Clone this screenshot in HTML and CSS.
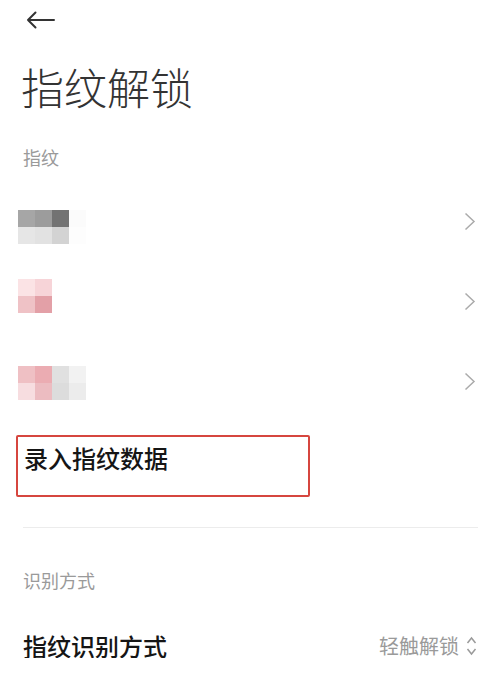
FILE: index.html
```html
<!DOCTYPE html>
<html lang="zh-CN">
<head>
<meta charset="utf-8">
<title>指纹解锁</title>
<link rel="stylesheet" href="styles.css">
</head>
<body>
<div class="topbar">
  <svg class="back" width="30" height="18" viewBox="0 0 30 18"><path d="M2 9 H28 M9.5 1.5 L2 9 L9.5 16.5" fill="none" stroke="#333" stroke-width="2" stroke-linecap="round" stroke-linejoin="round"/></svg>
</div>
<h1 class="title">指纹解锁</h1>
<div class="section-label">指纹</div>
<div class="fp-list">
  <div class="fp-row fp-row-1">
    <div class="pix cols-4">
      <span class="c-a1"></span><span class="c-a2"></span><span class="c-a3"></span><span class="c-a4"></span>
      <span class="c-a5"></span><span class="c-a6"></span><span class="c-a7"></span><span class="c-a8"></span>
    </div>
    <svg class="chev" width="12" height="19" viewBox="0 0 12 19"><path d="M1.5 1.5 L10 9.5 L1.5 17.5" fill="none" stroke="#ababab" stroke-width="1.5"/></svg>
  </div>
  <div class="fp-row fp-row-2">
    <div class="pix cols-2">
      <span class="c-b1"></span><span class="c-b2"></span>
      <span class="c-b3"></span><span class="c-b4"></span>
    </div>
    <svg class="chev" width="12" height="19" viewBox="0 0 12 19"><path d="M1.5 1.5 L10 9.5 L1.5 17.5" fill="none" stroke="#ababab" stroke-width="1.5"/></svg>
  </div>
  <div class="fp-row fp-row-3">
    <div class="pix cols-4">
      <span class="c-d1"></span><span class="c-d2"></span><span class="c-d3"></span><span class="c-d4"></span>
      <span class="c-d5"></span><span class="c-d6"></span><span class="c-d7"></span><span class="c-d8"></span>
    </div>
    <svg class="chev" width="12" height="19" viewBox="0 0 12 19"><path d="M1.5 1.5 L10 9.5 L1.5 17.5" fill="none" stroke="#ababab" stroke-width="1.5"/></svg>
  </div>
</div>
<div class="enroll">录入指纹数据</div>
<div class="divider"></div>
<div class="section-label section-label-2">识别方式</div>
<div class="mode-row">
  <span class="mode-title">指纹识别方式</span>
  <span class="mode-value">
    <span class="mode-text">轻触解锁</span>
    <svg class="updown" width="11" height="22" viewBox="0 0 11 22"><path d="M1.5 8 L5.5 3 L9.5 8 M1.5 14 L5.5 19 L9.5 14" fill="none" stroke="#9a9a9a" stroke-width="1.5"/></svg>
  </span>
</div>
</body>
</html>
```

FILE: styles.css
```css
html, body {
  margin: 0;
  padding: 0;
  background: #ffffff;
}
body {
  font-family: "Noto Sans CJK SC", "Noto Sans", sans-serif;
  color: #1a1a1a;
  width: 499px;
  overflow: hidden;
}
.topbar {
  height: 39px;
  display: flex;
  align-items: center;
  padding-left: 26px;
}
.back { display: block; }
.title {
  margin: 26px 0 0 0;
  padding-left: 21px;
  font-size: 43px;
  line-height: 43px;
  font-weight: 200;
  color: #333333;
}
.section-label {
  margin-top: 40px;
  padding-left: 23px;
  font-size: 18px;
  line-height: 18px;
  color: #9a9a9a;
}
.fp-list {
  margin-top: 15px;
}
.fp-row {
  height: 80px;
  display: flex;
  justify-content: space-between;
  align-items: center;
  padding: 0 23px 0 18px;
}
.pix {
  display: grid;
  grid-auto-rows: 17px;
  align-self: flex-start;
}
.cols-2 { grid-template-columns: repeat(2, 17px); }
.cols-4 { grid-template-columns: repeat(4, 17px); }
.fp-row-1 .pix { margin-top: 29px; }
.fp-row-2 .pix { margin-top: 18px; }
.fp-row-3 .pix { margin-top: 25px; }
.chev { display: block; }

.c-a1 { background: #a6a6a6; }
.c-a2 { background: #9c9c9c; }
.c-a3 { background: #737373; }
.c-a4 { background: #fbfbfb; }
.c-a5 { background: #e6e6e6; }
.c-a6 { background: #e2e2e2; }
.c-a7 { background: #d3d3d3; }
.c-a8 { background: #fdfdfd; }

.c-b1 { background: #fbe3e5; }
.c-b2 { background: #f7d4d8; }
.c-b3 { background: #efc2c6; }
.c-b4 { background: #e3a0a7; }

.c-d1 { background: #efc0c4; }
.c-d2 { background: #ebacb2; }
.c-d3 { background: #e0e0e0; }
.c-d4 { background: #f2f2f2; }
.c-d5 { background: #f7dde0; }
.c-d6 { background: #ecbcc1; }
.c-d7 { background: #dcdcdc; }
.c-d8 { background: #ececec; }

.enroll {
  margin: 14px 0 0 16px;
  width: 294px;
  height: 62px;
  box-sizing: border-box;
  border: 2px solid #d6463f;
  border-radius: 2px;
  padding: 9px 0 0 6px;
  font-size: 24px;
  line-height: 24px;
  font-weight: 500;
  color: #151515;
}
.divider {
  margin: 30px 21px 0 23px;
  height: 1px;
  background: #ececec;
}
.section-label-2 {
  margin-top: 43px;
}
.mode-row {
  margin-top: 45px;
  display: flex;
  justify-content: space-between;
  align-items: center;
  padding: 0 22px 0 23px;
}
.mode-title {
  font-size: 24px;
  line-height: 24px;
  font-weight: 500;
  color: #151515;
}
.mode-value {
  display: flex;
  align-items: center;
  gap: 7px;
}
.mode-text {
  font-size: 20px;
  line-height: 20px;
  color: #9a9a9a;
}
.updown { display: block; }
```
